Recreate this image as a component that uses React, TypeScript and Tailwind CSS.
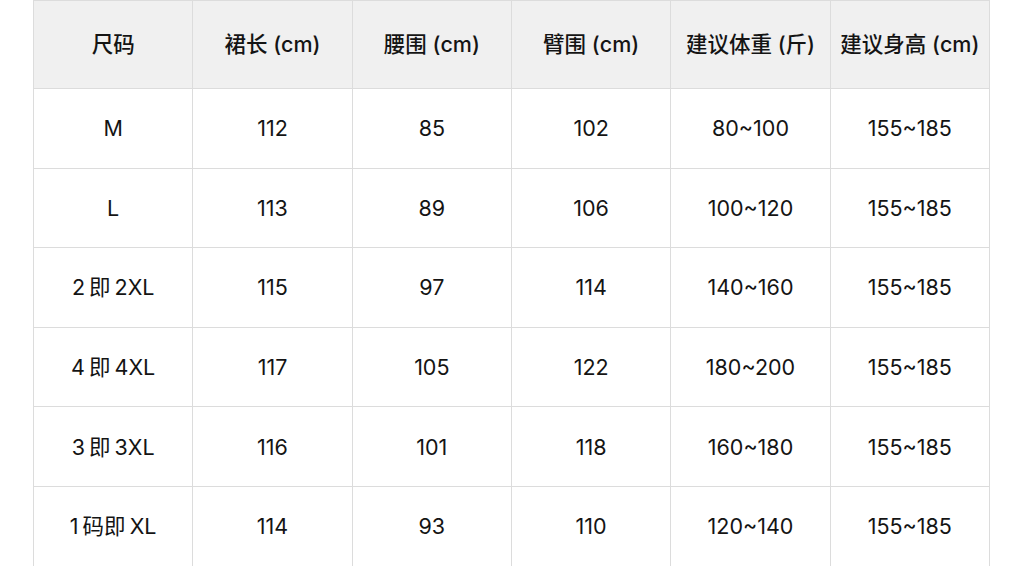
import React from 'react';

const headers = ['尺码', '裙长 (cm)', '腰围 (cm)', '臂围 (cm)', '建议体重 (斤)', '建议身高 (cm)'];

const rows: string[][] = [
  ['M', '112', '85', '102', '80~100', '155~185'],
  ['L', '113', '89', '106', '100~120', '155~185'],
  ['2即2XL', '115', '97', '114', '140~160', '155~185'],
  ['4即4XL', '117', '105', '122', '180~200', '155~185'],
  ['3即3XL', '116', '101', '118', '160~180', '155~185'],
  ['1码即XL', '114', '93', '110', '120~140', '155~185'],
];

const spaced = (text: string) => {
  const parts = text.match(/[\u4e00-\u9fff]+|[^\u4e00-\u9fff]+/g) || [];
  return parts.map((p, i) =>
    /[\u4e00-\u9fff]/.test(p) ? (
      <span key={i} className="mx-[4px]">
        {p}
      </span>
    ) : (
      <span key={i}>{p}</span>
    )
  );
};

const App: React.FC = () => {
  return (
    <div
      className="w-[1024px] h-[566px] bg-white overflow-hidden"
      style={{ fontFamily: 'Inter, "Noto Sans CJK SC", sans-serif' }}
    >
      <table className="ml-[33px] w-[957px] border-collapse table-fixed text-[21.5px] text-[#141414]">
        <thead>
          <tr className="h-[88px] bg-[#f0f0f0]">
            {headers.map((h, i) => (
              <th key={i} className="border border-[#dcdcdc] font-medium text-center align-middle whitespace-nowrap">
                {h}
              </th>
            ))}
          </tr>
        </thead>
        <tbody>
          {rows.map((row, ri) => (
            <tr key={ri} className="h-[79.6px]">
              {row.map((cell, ci) => (
                <td key={ci} className="border border-[#dcdcdc] font-normal text-center align-middle">
                  {ci === 0 ? spaced(cell) : cell}
                </td>
              ))}
            </tr>
          ))}
        </tbody>
      </table>
    </div>
  );
};

export default App;
